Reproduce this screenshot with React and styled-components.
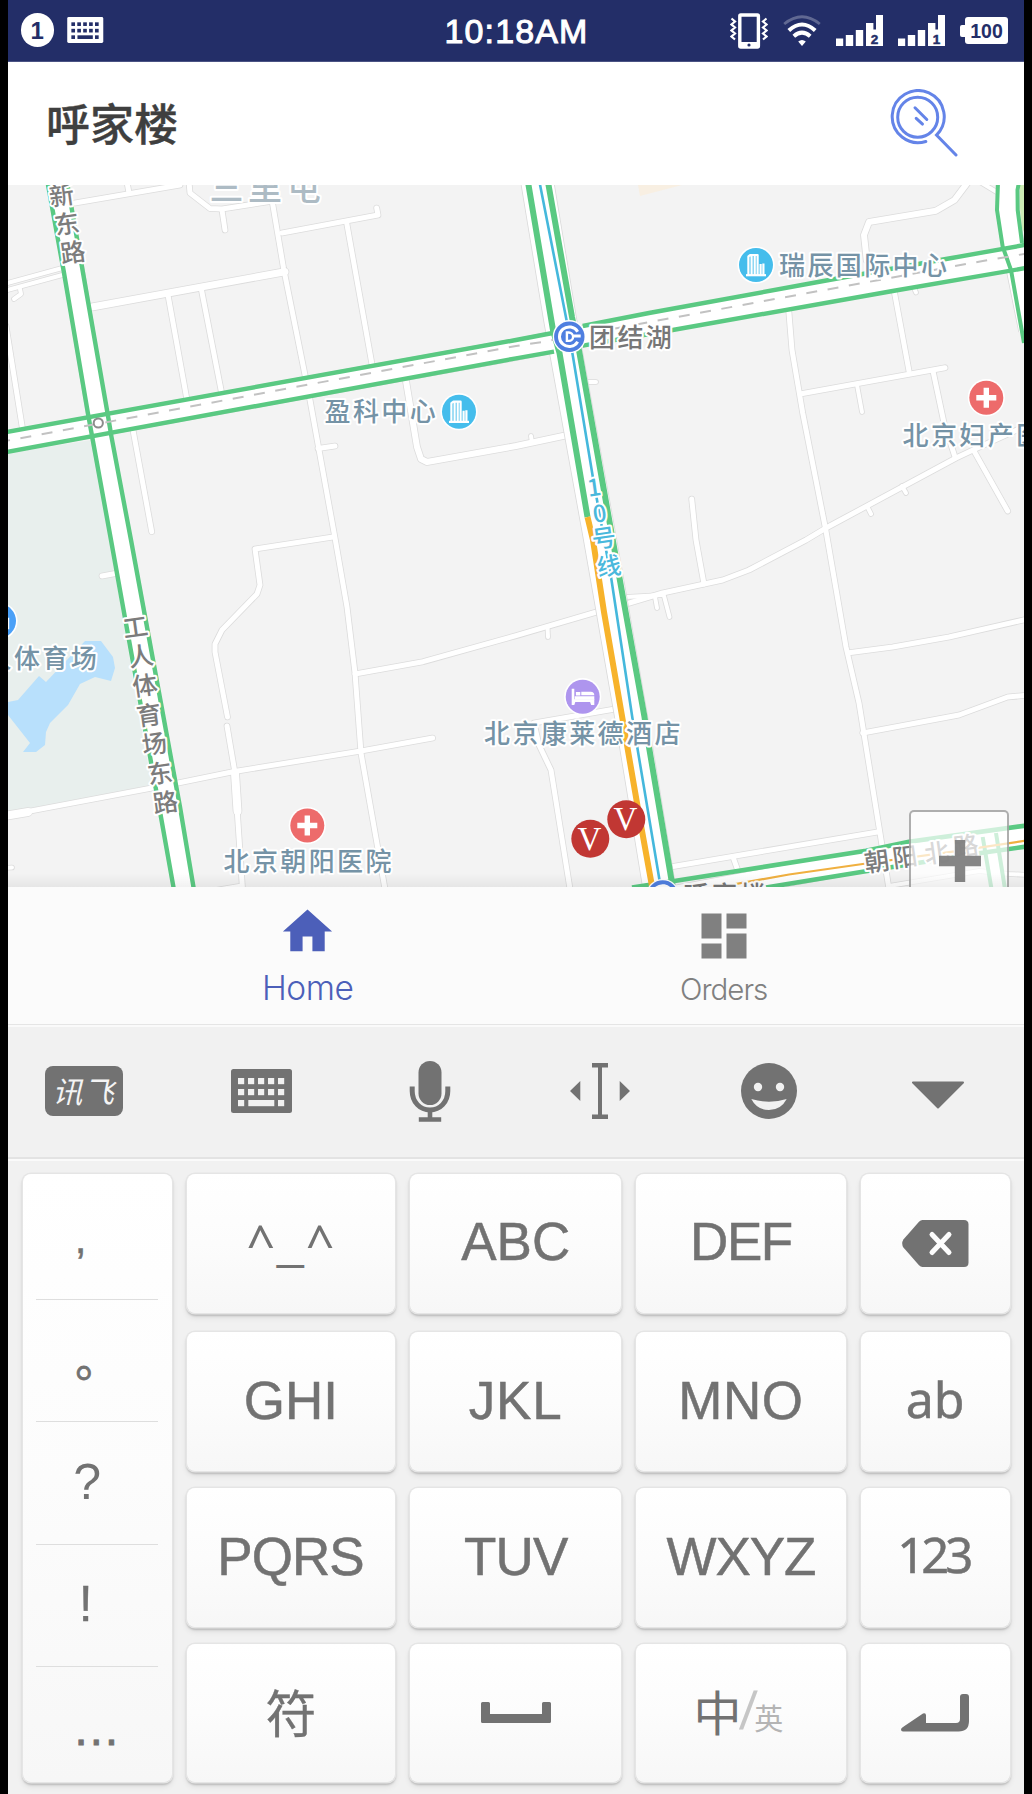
import React from "react";
import styled, { createGlobalStyle } from "styled-components";

const GlobalStyle = createGlobalStyle`
  html, body { margin: 0; padding: 0; background: #000; }
  * { box-sizing: border-box; }
`;

const SANS = `"Liberation Sans", "Noto Sans CJK SC", sans-serif`;
const CJK = `"Noto Sans CJK SC", sans-serif`;
const INK = "#727272";

const Device = styled.div`
  width: 1032px;
  height: 1794px;
  padding: 0 8px;
  background: #000;
  overflow: hidden;
  font-family: ${SANS};
`;
const Screen = styled.div`
  display: flex;
  flex-direction: column;
  width: 1016px;
  height: 1794px;
  background: #f1f1f1;
  overflow: hidden;
`;

/* ---------- status bar ---------- */
const StatusBar = styled.header`
  display: grid;
  grid-template-columns: 1fr auto 1fr;
  align-items: center;
  height: 62px;
  flex: none;
  background: #232e68;
  border-bottom: 1px solid #4a5384;
`;
const StatusGroup = styled.div`
  display: flex;
  align-items: center;
  justify-content: ${(p) => (p.$end ? "flex-end" : "flex-start")};
  gap: ${(p) => p.$gap}px;
  padding: ${(p) => (p.$end ? "0 16px 0 0" : "0 0 1px 12.5px")};
`;
const NoticeCount = styled.span`
  display: flex;
  align-items: center;
  justify-content: center;
  width: 33.5px;
  height: 33.5px;
  border-radius: 50%;
  background: #fff;
  color: #232e68;
  font: bold 24px/33px ${SANS};
`;
const Clock = styled.time`
  font-size: 34px;
  line-height: 60px;
  letter-spacing: 1.1px;
  padding-left: 1px;
  color: #fff;
  -webkit-text-stroke: 1px #fff;
`;
const Glyph = styled.svg`
  display: block;
  flex: none;
`;
const Battery = styled.span`
  display: flex;
  align-items: center;
  &::before {
    content: "";
    width: 5px;
    height: 12px;
    border-radius: 2px 0 0 2px;
    background: #fff;
  }
`;
const BatteryBody = styled.span`
  width: 43px;
  height: 27.5px;
  border-radius: 3px;
  background: #fff;
  color: #232e68;
  text-align: center;
  font: bold 19.5px/28px ${SANS};
`;

/* ---------- title bar ---------- */
const TitleBar = styled.div`
  display: flex;
  align-items: center;
  justify-content: space-between;
  height: 123px;
  flex: none;
  padding: 0 66.5px 1px 38px;
  background: #fff;
`;
const Title = styled.h1`
  margin: 0;
  padding-bottom: 2px;
  font: 500 44px/60px ${CJK};
  color: #3f3f3f;
  -webkit-text-stroke: 0.4px #3f3f3f;
`;

/* ---------- map ---------- */
const MapArea = styled.main`
  position: relative;
  height: 702px;
  flex: none;
  overflow: hidden;
  background: #f3f3f3;
  &::after {
    content: "";
    position: absolute;
    left: 0;
    right: 0;
    bottom: 0;
    height: 14px;
    background: linear-gradient(rgba(0, 0, 0, 0), rgba(0, 0, 0, 0.055));
  }
`;
const MapLabel = styled.text`
  font-family: ${CJK};
  font-weight: 500;
  font-size: ${(p) => p.$size || 26}px;
  letter-spacing: ${(p) => p.$gap ?? 2.4}px;
  fill: ${(p) => p.$color || "#7593a6"};
  stroke: #fff;
  stroke-width: 4px;
  stroke-linejoin: round;
  paint-order: stroke;
`;
const PinLetter = styled.text`
  font: 33px "Liberation Serif", serif;
  fill: #fff;
  text-anchor: middle;
`;
const ZoomIn = styled.button`
  position: absolute;
  left: 901px;
  top: 625px;
  width: 100px;
  height: 102px;
  padding: 0 0 0 1px;
  display: flex;
  align-items: center;
  justify-content: center;
  border: 2px solid rgba(110, 110, 110, 0.55);
  border-radius: 5px;
  background: rgba(255, 255, 255, 0.7);
`;

/* ---------- tabs ---------- */
const Tabs = styled.nav`
  display: flex;
  justify-content: center;
  height: 138px;
  flex: none;
  padding-right: 0.6px;
  background: #fbfbfb;
  border-bottom: 1px solid #e5e5e5;
`;
const Tab = styled.div`
  display: flex;
  flex-direction: column;
  align-items: center;
  width: 416px;
  flex: none;
  padding-top: ${(p) => p.$top}px;
  color: ${(p) => (p.$active ? "#4c5fb9" : "#808080")};
`;
const TabName = styled.span`
  font-family: Inter, ${SANS};
  font-weight: 300;
  font-size: ${(p) => p.$size}px;
  line-height: 40px;
  letter-spacing: ${(p) => p.$track}px;
  margin-top: ${(p) => p.$top}px;
`;

/* ---------- keyboard ---------- */
const Toolbar = styled.div`
  display: flex;
  height: 134px;
  flex: none;
  padding-bottom: 2px;
  border-top: 2px solid #fafafa;
  border-bottom: 2px solid #e3e3e3;
`;
const Tool = styled.div`
  display: flex;
  align-items: center;
  justify-content: center;
  width: 169.33px;
  padding-right: ${(p) => p.$shift || 1.4}px;
`;
const BrandBadge = styled.span`
  width: 78px;
  height: 50px;
  padding-left: 7px;
  border-radius: 8px;
  background: ${INK};
  color: #f4f4f4;
  font: italic 400 30px/48px ${CJK};
  letter-spacing: 1.5px;
  white-space: nowrap;
`;
const Keyboard = styled.section`
  display: flex;
  gap: 15px;
  flex: 1;
  padding: 13px 14.7px 12px;
  border-top: 2px solid #fafafa;
`;
const keyFace = `
  border-radius: 8px;
  background: linear-gradient(#ffffff, #fcfcfc 50%, #f7f7f7);
  box-shadow: 0 0 0 1.5px #e5e5e5, 0 2px 2px 1px rgba(0,0,0,.17), 0 4px 6px rgba(0,0,0,.1);
  color: ${INK};
`;
const MarksKey = styled.div`
  ${keyFace}
  display: flex;
  flex-direction: column;
  flex: none;
  width: 149px;
  height: 608px;
  padding: 0 13.5px;
`;
const Mark = styled.div`
  height: ${(p) => p.$h}px;
  padding-left: ${(p) => p.$x}px;
  padding-top: ${(p) => p.$y}px;
  border-bottom: ${(p) => (p.$last ? "none" : "1.4px solid #dedede")};
  font: ${(p) => p.$size}px/60px ${(p) => (p.$cjk ? CJK : SANS)};
  -webkit-text-stroke: ${(p) => p.$bold || 0}px ${INK};
  overflow: hidden;
`;
const KeyRows = styled.div`
  display: flex;
  flex-direction: column;
  gap: 17px;
`;
const KeyRow = styled.div`
  display: grid;
  grid-template-columns: 208.5px 211px 209.5px 149px;
  gap: 15px;
  height: ${(p) => p.$h || 138.6}px;
  margin-bottom: ${(p) => p.$below || 0.4}px;
`;
const Key = styled.div`
  ${keyFace}
  display: flex;
  align-items: center;
  justify-content: center;
  padding-bottom: ${(p) => p.$lift || 0}px;
  padding-right: ${(p) => p.$left || 0}px;
  font-family: ${(p) => p.$font || SANS};
  font-size: ${(p) => p.$size || 53}px;
  line-height: 60px;
  letter-spacing: ${(p) => p.$track || 0}px;
  -webkit-text-stroke: ${(p) => p.$bold ?? 0.5}px ${INK};
`;
const Underscore = styled.span`
  font: 48px/60px ${SANS};
  margin: 0 2px;
`;
const LangMain = styled.span`
  font: 48px/60px ${CJK};
`;
const LangSlash = styled.span`
  font: 53px/60px ${SANS};
  color: #c6c6c6;
  transform: skewX(-6deg);
  margin: 2px -1px 0;
`;
const LangAlt = styled.span`
  font: 29px/40px ${CJK};
  color: #b4b4b4;
  padding-top: 14px;
`;

/* Road centre lines: [points, width] */
const ROADS = [
  ["75,203 180,185", 5],
  ["127,182 129,193", 5],
  ["189,182 190,193 210,208.5 222,209 273,201", 5],
  ["222,210 225,230", 5],
  ["272,200 283.5,268 305,375 310,400 318.5,447 335,538 347,607 355,673 361,753 385,889", 5],
  ["282,233 378,215 376.7,208", 5],
  ["346.7,223 373,370", 5],
  ["92,307 285,271.7", 7],
  ["168,295 187,400", 5],
  ["201.5,290 222,395", 5],
  ["4,284 66,267", 4],
  ["4,291 66,274", 4],
  ["20,289 21,294 14,299", 4],
  ["6,326 22.7,430", 5],
  ["133,430 151.7,531.7", 5],
  ["318,448.5 335,446", 5],
  ["405,375 417,447 421,459 427,462 516,446 570,434.5", 6],
  ["531,436 532,443", 4],
  ["333,537 255,549 260,585 257,594 222,630 215,644 215,652 227.5,717", 5],
  ["227,726 235,773", 5],
  ["235,773 237.5,811", 8],
  ["237,808 242.5,889", 5],
  ["4,816 28,812", 8],
  ["4,816 152,788 178,783 233,771.7 361,751 432.7,738", 5],
  ["355,674 423,661.7 516,635.7 600,611", 5],
  ["547.5,627 548,637", 4],
  ["102,576 118,573", 5],
  ["4,868 12,867.5", 4],
  ["242,885 218,889", 3],
  ["968,182 954.5,200 936,210.7 869,222 864,235 866.7,260", 6],
  ["980,182 1000,194", 4],
  ["788.7,310 792,350 802.7,413 826,531 846,647 859,703 879,827 889,889", 5],
  ["802.7,393.5 945,367.7", 5],
  ["857,385 862,412", 4],
  ["894,290 909,371", 5],
  ["933,371 944,423 955,457", 5],
  ["1030,424 973,450 956,458 826,528 806,540 749,570 722.7,580 662.7,593 626,604", 5],
  ["626,597 662,595", 4],
  ["974,451 1007.7,511", 5],
  ["902,486 906,493", 4],
  ["868,508 871,514", 4],
  ["588,382 596,382", 4],
  ["914,288 916,292.5", 4],
  ["691.7,499 696,540 704,584", 5],
  ["655,597 657,608", 4],
  ["664,596 669.5,617", 4],
  ["849,652.7 892.7,647 949,637 1030,618.5", 5],
  ["862.7,733 959,715 1007.7,697 1030,695", 5],
  ["618,708.5 534,723 539,745 551,770 570,889", 5],
  ["670,867 879,831.7", 5],
  ["733,857 738,871", 5],
  ["889,886 979,871 1009,874 1030,875", 4],
];

const MAJOR = [
  ["57,182 73,268 98,418 121,540 136,619 171,818 183.5,889", 21],
  ["537.3,182 560,319 566,352 598,528 610,596 631.7,720 659.5,889", 32],
  ["4,442.5 516,349.5 582,336.5 660,322 829,291 1030,256", 21],
  ["1007.5,182 1007.5,210 1013,246 1030,330", 22],
  ["676,896 866,861 1030,836", 21],
  ["989,835 998,889", 11],
];

const GREEN = [
  ["47.5,182 63.5,270 88.5,416.7 111,540 125,618 161.5,820 173.8,889", 4.4],
  ["67,182 82,267 107.5,413 111.5,437 131,540 145.7,620 180,807 193.8,889", 4.4],
  ["4,432.4 516,340 552.7,333", 4.4],
  ["4,452.4 516,358.3 554,351.7", 4.4],
  ["582.7,326 649,313 829,280 946,259 1030,244", 4.4],
  ["582.7,345.7 672.7,330 892.7,291 1030,267.3", 4.4],
  ["998,182 997,210 1002.7,246.7 1011,270 1024,343", 4],
  ["1019,182 1017.5,190 1017.7,210 1022,243", 4],
  ["528,182 553,330 559.5,353 587.5,517", 6],
  ["548,182 572,317 579.5,353 611,530 619.5,578 644.5,717 649,747 673,889", 6],
  ["632,887.5 676,880.7 866,850.7 909,841.7 1030,825", 4.6],
  ["766,887.5 862.7,871.7 979,853.3 1030,846", 4.6],
  ["982.7,837 991.5,889", 4],
  ["996,833 1005,889", 4],
];

const LABELS = [
  ["盈科中心", 324.5, 421],
  ["瑞辰国际中心", 779, 274.5],
  ["团结湖", 589, 346.5, "#777"],
  ["北京妇产医", 902.5, 444.5],
  ["北京康莱德酒店", 484, 743],
  ["北京朝阳医院", 223.5, 871],
  ["人体育场", -14.5, 667.5],
  ["呼家楼", 683, 905, "#777"],
];

const ROAD_CHARS = [
  ["新", 61.7, 195.7], ["东", 67, 224], ["路", 73, 252.6],
  ["工", 135.4, 627.3], ["人", 141, 656.3], ["体", 145, 685.7], ["育", 149, 715.3],
  ["场", 154.5, 744], ["东", 160, 773.5], ["路", 165.4, 802.6],
  ["朝", 877, 861.7], ["阳", 905, 857], ["北", 937, 853], ["路", 966, 846],
];
const LINE_CHARS = [["1", 594, 487], ["0", 599.5, 513], ["号", 604, 538], ["线", 609, 566]];

const Poi = ({ x, y, color, children }) => (
  <g transform={`translate(${x} ${y})`}>
    <circle r="18.6" fill="#fff" />
    <circle r="17" fill={color} />
    {children}
  </g>
);
const Tower = () => (
  <g fill="none" stroke="#fff" strokeWidth="2.2" strokeLinejoin="round">
    <path d="M-7.6 10V-8.6L-5.6 -10H1.6V10M-4.4 -9V10M-1.3 -9V10M7.4 10V-1.5M4.6 -1V10" />
    <path d="M-10 10.2H10" />
  </g>
);
const Cross = () => <path d="M-10 0H10M0-10V10" stroke="#fff" strokeWidth="5.4" />;
const Metro = ({ x, y }) => (
  <g transform={`translate(${x} ${y})`}>
    <circle r="16.6" fill="#fff" />
    <circle r="15.2" fill="#4f7fe0" />
    <path d="M8.4 -5A9.8 9.8 0 1 0 8.4 5M4.6 -.6H11.4" fill="none" stroke="#fff" strokeWidth="3" />
    <path d="M-2.4 -4.2H-.4A4.2 4.2 0 0 1 -.4 4.2H-2.4Z" fill="none" stroke="#fff" strokeWidth="2.4" />
  </g>
);

const CityMap = () => (
  <Glyph width="1016" height="702" viewBox="8 185 1016 702">
    <polygon points="8,453 92,440 152,788 8,813" fill="#e8efed" />
    <polygon
      points="8,702 18,700 39,676 46,682 85,641 101,641 113,657 115,668 111,681 95,677 80,684 68,705 50,723 46,732 45,745 36,752 23,752 30,743 8,715"
      fill="#b8e0fc"
    />
    <polygon points="638,185 682,185 640,196" fill="#f8efe2" />
    <g fill="none" strokeLinejoin="round" strokeLinecap="round">
      {ROADS.map(([pts, w], i) => <polyline key={i} points={pts} stroke="#dcdcdc" strokeWidth={w + 1.6} />)}
      {ROADS.map(([pts, w], i) => <polyline key={i} points={pts} stroke="#fff" strokeWidth={w} />)}
    </g>
    <g fill="none">
      {MAJOR.map(([pts, w], i) => <polyline key={i} points={pts} stroke="#dadada" strokeWidth={w + 1.6} />)}
      {MAJOR.map(([pts, w], i) => <polyline key={i} points={pts} stroke="#fff" strokeWidth={w} />)}
      <polygon points="1020,185 1024,185 1024,232 1022,228 1020,208" fill="#cdebb4" />
      {GREEN.map(([pts, w], i) => <polyline key={i} points={pts} stroke="#5ac982" strokeWidth={w} />)}
      <polyline points="587.5,517 593,540 604,612 622.7,720 637.7,807 652.5,889" stroke="#f7b32b" strokeWidth="6" />
      <polyline points="719,887 789,874.5 862.7,864 952.7,851.7 1030,840" stroke="#f0b040" strokeWidth="2.2" />
      <polyline points="8,440.5 516,346 542,342 666,319 982.7,261 1030,253" stroke="#c2c2c2" strokeWidth="2" strokeDasharray="11 10.6" strokeDashoffset="9" />
      <polyline points="539.5,182 566.5,320 572.7,355 593,478 611.5,580 632.7,720 661,889" stroke="#45b8dc" strokeWidth="2.6" />
      <circle cx="98.3" cy="423" r="4.6" stroke="#8c8c8c" strokeWidth="2" fill="#fff" />
    </g>

    <MapLabel x="209.5" y="200" $size={34} $gap={4.6} $color="#adbbc4">三里屯</MapLabel>
    {ROAD_CHARS.map(([c, x, y], i) => (
      <MapLabel key={i} $size={25} $gap={0} $color="#7c7c7c" textAnchor="middle" transform={`translate(${x} ${y}) rotate(-8)`} y="9">{c}</MapLabel>
    ))}
    {LINE_CHARS.map(([c, x, y], i) => (
      <MapLabel key={i} $size={24} $gap={0} $color="#4ab8dc" textAnchor="middle" transform={`translate(${x} ${y}) rotate(-8)`} y="9">{c}</MapLabel>
    ))}

    <Poi x={459} y={411.7} color="#45bdec"><Tower /></Poi>
    <Poi x={756} y={265} color="#45bdec"><Tower /></Poi>
    <Poi x={986.3} y={397.7} color="#ed6b6b"><Cross /></Poi>
    <Poi x={307.3} y={825.5} color="#ed6b6b"><Cross /></Poi>
    <Poi x={-1} y={621} color="#4aa0f7">
      <path d="M4 -2H9V7H4" fill="none" stroke="#fff" strokeWidth="2.4" />
    </Poi>
    <Poi x={582.7} y={696.7} color="#ae95ee">
      <path d="M-11-8H-8.4V2.6H11.6V8.4H8.4L7.4 5.4H-7.4L-8.4 8.4H-11Z" fill="#fff" />
      <path d="M-8 -.4H11.6V3H-8Z M-6.8 -4.6H-2.4V-1.2H-6.8Z M-1.4 -5H8Q11.6 -5 11.6 -1.4H-1.4Z" fill="#fff" />
    </Poi>
    <Metro x={569.3} y={336.7} />
    <Metro x={662.7} y={895.5} />
    {LABELS.map(([t, x, y, color]) => (
      <MapLabel key={t} x={x} y={y} $color={color}>{t}</MapLabel>
    ))}
    {[[590.3, 838.7], [626.3, 819.3]].map(([x, y]) => (
      <g key={x} transform={`translate(${x} ${y})`}>
        <circle r="19" fill="#c13733" />
        <PinLetter y="10.8" x="-.8">V</PinLetter>
      </g>
    ))}
  </Glyph>
);

const KeyboardGlyph = ({ w, h, fill, hole }) => (
  <Glyph width={w} height={h} viewBox="0 0 61 44">
    <rect width="61" height="44" rx="2.5" fill={fill} />
    <g fill={hole}>
      {[7, 17, 27, 37, 47].map((x) => <rect key={x} x={x} y="9" width="6.2" height="6.2" />)}
      {[7, 17, 27, 37, 47].map((x) => <rect key={x} x={x} y="20" width="6.2" height="6.2" />)}
      <rect x="7" y="31" width="6.2" height="6.2" />
      <rect x="17.3" y="31" width="26" height="6.2" />
      <rect x="47" y="31" width="6.2" height="6.2" />
    </g>
  </Glyph>
);

const Signal = ({ n }) => (
  <Glyph width="47" height="31" viewBox="0 0 47 31">
    <path d="M0 23.4H7.2V31H0ZM9.8 20H17.2V31H9.8ZM19.8 15H27.2V31H19.8ZM30 8H37.4V14.6H40V0H47V31H30Z" fill="#fff" />
    <text x="38.6" y="28.6" textAnchor="middle" fontFamily="Liberation Sans" fontWeight="bold" fontSize="13.5" fill="#232e68" stroke="#232e68" strokeWidth=".5">{n}</text>
  </Glyph>
);

export default function App() {
  return (
    <Device>
      <GlobalStyle />
      <Screen>
        <StatusBar>
          <StatusGroup $gap={13}>
            <NoticeCount>1</NoticeCount>
            <KeyboardGlyph w={36.5} h={26} fill="#fff" hole="#232e68" />
          </StatusGroup>
          <Clock>10:18AM</Clock>
          <StatusGroup $end $gap={15}>
            <Glyph width="38" height="36" viewBox="0 0 38 36">
              <rect x="9.8" y="2" width="18.6" height="32" rx="1" fill="none" stroke="#fff" strokeWidth="3.4" />
              <rect x="9" y="29" width="20" height="6" fill="#fff" />
              <circle cx="19" cy="32" r="1.6" fill="#232e68" />
              <path d="M1.5 5.5L5 8.5L1.5 11.5L5 14.5L1.5 17.5L5 20.5L1.5 23.5L5 26.5M36.5 5.5L33 8.5L36.5 11.5L33 14.5L36.5 17.5L33 20.5L36.5 23.5L33 26.5" fill="none" stroke="#fff" strokeWidth="2.2" />
            </Glyph>
            <Glyph width="38" height="32" viewBox="0 0 38 32">
              <g fill="none" stroke="#fff">
                <path d="M1.2 9Q19 -5.5 36.8 9" strokeWidth="2.8" opacity=".28" />
                <path d="M5.8 15.5Q19 3.5 32.2 15.5" strokeWidth="4" />
                <path d="M10.8 21.2Q19 14 27.2 21.2" strokeWidth="4" />
              </g>
              <path d="M15.2 26.5Q19 23.5 22.8 26.5L19 31Z" fill="#fff" />
            </Glyph>
            <Signal n="2" />
            <Signal n="1" />
            <Battery><BatteryBody>100</BatteryBody></Battery>
          </StatusGroup>
        </StatusBar>

        <TitleBar>
          <Title>呼家楼</Title>
          <Glyph width="68" height="68" viewBox="890 89.5 68 68">
            <g fill="none" stroke="#6484e8" strokeWidth="3" strokeLinecap="round">
              <path d="M925.8 142A26 26 0 1 1 936.5 135.6L956 155.5" />
              <circle cx="917.7" cy="117.7" r="20" />
              <path d="M915 108.3L926.8 120M916.2 118.8L922.5 124.6" />
            </g>
          </Glyph>
        </TitleBar>

        <MapArea>
          <CityMap />
          <ZoomIn aria-label="+">
            <Glyph width="42" height="42" viewBox="0 0 42 42">
              <path d="M0 21H42M21 0V42" stroke="#808080" strokeOpacity=".95" strokeWidth="10.4" />
            </Glyph>
          </ZoomIn>
        </MapArea>

        <Tabs>
          <Tab $active $top={14.5}>
            <Glyph width="59" height="59" viewBox="0 0 24 24" fill="currentColor">
              <path d="M10 20v-6h4v6h5v-8h3L12 3 2 12h3v8z" />
            </Glyph>
            <TabName $size={33.5} $track={-0.5} $top={7}>Home</TabName>
          </Tab>
          <Tab $top={19}>
            <Glyph width="60" height="60" viewBox="0 0 24 24" fill="currentColor">
              <path d="M3 13h8V3H3v10zm0 8h8v-6H3v6zm10 0h8V11h-8v10zm0-18v6h8V3h-8z" />
            </Glyph>
            <TabName $size={29.5} $track={-1} $top={3}>Orders</TabName>
          </Tab>
        </Tabs>

        <Toolbar>
          <Tool $shift={17}><BrandBadge>讯飞</BrandBadge></Tool>
          <Tool><KeyboardGlyph w={61} h={44} fill={INK} hole="#f1f1f1" /></Tool>
          <Tool $shift={2}>
            <Glyph width="42" height="61" viewBox="0 0 42 61">
              <rect x="9.5" y="0" width="23" height="44" rx="11.5" fill={INK} />
              <path d="M3.2 25.5V30C3.2 41 11 49 21 49S38.8 41 38.8 30V25.5" fill="none" stroke={INK} strokeWidth="5" />
              <path d="M21 49V58M9.8 58.5H32.2" stroke={INK} strokeWidth="4.6" />
            </Glyph>
          </Tool>
          <Tool>
            <Glyph width="60" height="56" viewBox="0 0 60 56" fill={INK}>
              <path d="M0 28L10.3 18V38ZM60 28L49.7 18V38ZM22 0H38V4.6H32V51.4H38V56H22V51.4H28V4.6H22Z" />
            </Glyph>
          </Tool>
          <Tool>
            <Glyph width="56" height="56" viewBox="0 0 56 56">
              <circle cx="28" cy="28" r="28" fill={INK} />
              <circle cx="17" cy="24" r="4.2" fill="#f1f1f1" />
              <circle cx="39" cy="24" r="4.2" fill="#f1f1f1" />
              <path d="M10.3 36Q28 41.5 45.7 36Q40 47 28 47T10.3 36Z" fill="#f1f1f1" />
            </Glyph>
          </Tool>
          <Tool $shift={2.6}>
            <Glyph width="52" height="36" viewBox="0 0 52 36">
              <path d="M1 9.5H51L26 34.5Z" fill={INK} stroke={INK} strokeWidth="2" strokeLinejoin="round" />
            </Glyph>
          </Tool>
        </Toolbar>

        <Keyboard>
          <MarksKey>
            <Mark $h={125.5} $x={38.5} $y={35} $size={42} $bold={0.5}>,</Mark>
            <Mark $h={122.5} $x={39} $y={28} $size={44} $bold={0.8} $cjk>。</Mark>
            <Mark $h={122.5} $x={37} $y={30} $size={50}>?</Mark>
            <Mark $h={122.5} $x={42.5} $y={29} $size={50} $bold={0.4}>!</Mark>
            <Mark $h={115} $x={36} $y={31.5} $size={48} $bold={0.8} $last>…</Mark>
          </MarksKey>
          <KeyRows>
            <KeyRow $below={2.4}>
              <Key $font={`"Noto Sans", sans-serif`} $size={50} $bold={0} $lift={2} $left={1}>^<Underscore>_</Underscore>^</Key>
              <Key $lift={2}>ABC</Key>
              <Key $track={-1.4} $lift={2}>DEF</Key>
              <Key>
                <Glyph width="67" height="47" viewBox="0 0 67 47">
                  <path d="M20.5 0H62Q66.5 0 66.5 4.5V42.5Q66.5 47 62 47H20.5Q18.5 47 17 45.3L1.4 27.5Q-1 23.5 1.4 19.5L17 1.7Q18.5 0 20.5 0Z" fill={INK} />
                  <path d="M30 14.5L47 32.5M47 14.5L30 32.5" stroke="#fdfdfd" strokeWidth="5" strokeLinecap="round" />
                </Glyph>
              </Key>
            </KeyRow>
            <KeyRow>
              <Key>GHI</Key>
              <Key $track={0.8}>JKL</Key>
              <Key $track={0.6}>MNO</Key>
              <Key $font={`"Noto Sans", sans-serif`} $size={50} $lift={5}>ab</Key>
            </KeyRow>
            <KeyRow>
              <Key $track={-1} $left={1}>PQRS</Key>
              <Key $track={-0.8}>TUV</Key>
              <Key $track={-1}>WXYZ</Key>
              <Key $font={`"Noto Sans", sans-serif`} $size={49} $track={-4} $lift={7} $left={4}>123</Key>
            </KeyRow>
            <KeyRow $h={138}>
              <Key $font={CJK} $size={51} $lift={4} $bold={0.3}>符</Key>
              <Key>
                <Glyph width="70" height="21" viewBox="0 0 70 21">
                  <path d="M1.5 0H7.5Q9 0 9 1.5V12H61V1.5Q61 0 62.5 0H68.5Q70 0 70 1.5V19.5Q70 21 68.5 21H1.5Q0 21 0 19.5V1.5Q0 0 1.5 0Z" fill={INK} />
                </Glyph>
              </Key>
              <Key $left={5} $lift={5} $bold={0}>
                <LangMain>中</LangMain>
                <LangSlash>/</LangSlash>
                <LangAlt>英</LangAlt>
              </Key>
              <Key>
                <Glyph width="68" height="38" viewBox="0 0 68 38">
                  <path d="M2 33L22 19.5Q25 18.5 25 21.5V29H55Q59 29 59 25V3Q59 0 62 0H65Q68 0 68 3V27Q68 37.5 57.5 37.5H2Q0 37.5 0 35.5Q0 34.2 2 33Z" fill={INK} />
                </Glyph>
              </Key>
            </KeyRow>
          </KeyRows>
        </Keyboard>
      </Screen>
    </Device>
  );
}
